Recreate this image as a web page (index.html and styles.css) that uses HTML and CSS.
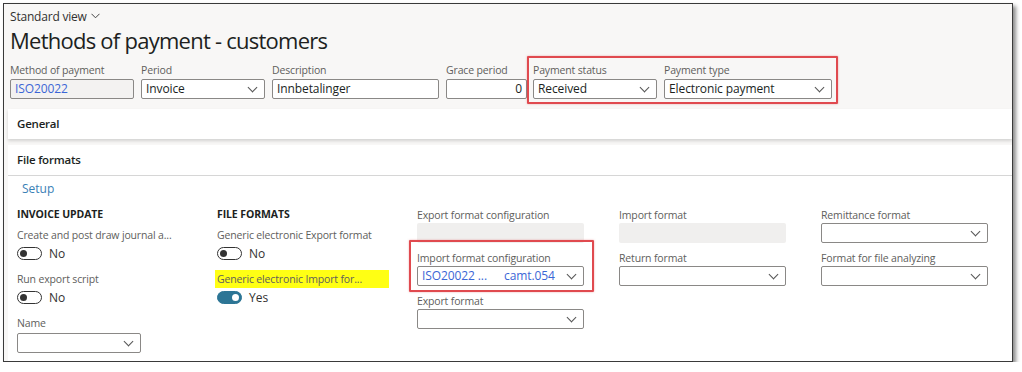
FILE: index.html
```html
<!DOCTYPE html>
<html lang="en">
<head>
    <meta charset="UTF-8">
    <title>Methods of payment - customers</title>
    <link rel="stylesheet" href="styles.css">
</head>
<body>
    <div class="frame">
        <div class="top-area">
            <div class="view-name">Standard view <svg class="view-chevron" width="9" height="6" viewBox="0 0 9 6"><path d="M0.5 0.8 L4.5 4.8 L8.5 0.8" fill="none" stroke="#444" stroke-width="1"/></svg></div>
            <h1 class="page-title">Methods of payment - customers</h1>

            <div class="header-fields">
                <div class="field w124">
                    <label>Method of payment</label>
                    <div class="input readonly link-text">ISO20022</div>
                </div>
                <div class="field w124">
                    <label>Period</label>
                    <div class="input select">Invoice</div>
                </div>
                <div class="field w167">
                    <label>Description</label>
                    <div class="input">Innbetalinger</div>
                </div>
                <div class="field w81">
                    <label>Grace period</label>
                    <div class="input number">0</div>
                </div>
                <div class="field w124 status-field">
                    <label>Payment status</label>
                    <div class="input select">Received</div>
                </div>
                <div class="field w168">
                    <label>Payment type</label>
                    <div class="input select">Electronic payment</div>
                </div>
            </div>
            <!-- red annotation box around status / type -->
            <div class="mark mark-header"></div>
        </div>

        <div class="section section-general">
            <div class="section-title">General</div>
        </div>

        <div class="section section-files">
            <div class="section-title with-line">File formats</div>
            <div class="section-body">
                <a class="setup-link">Setup</a>

                <div class="columns">
                    <div class="column">
                        <div class="group-title">INVOICE UPDATE</div>
                        <div class="field toggle-field">
                            <label>Create and post draw journal a...</label>
                            <div class="toggle-row"><span class="toggle"></span>No</div>
                        </div>
                        <div class="field toggle-field">
                            <label>Run export script</label>
                            <div class="toggle-row"><span class="toggle"></span>No</div>
                        </div>
                        <div class="field name-field">
                            <label>Name</label>
                            <div class="input select w124"></div>
                        </div>
                    </div>

                    <div class="column">
                        <div class="group-title">FILE FORMATS</div>
                        <div class="field toggle-field">
                            <label>Generic electronic Export format</label>
                            <div class="toggle-row"><span class="toggle"></span>No</div>
                        </div>
                        <div class="field toggle-field">
                            <label class="highlight">Generic electronic Import for...</label>
                            <div class="toggle-row"><span class="toggle on"></span>Yes</div>
                        </div>
                    </div>

                    <div class="column fmt-column">
                        <div class="field fmt-field">
                            <label>Export format configuration</label>
                            <div class="input disabled"></div>
                        </div>
                        <div class="field fmt-field">
                            <label>Import format configuration</label>
                            <div class="input select link-text"><span class="cfg-name">ISO20022 ...</span>camt.054</div>
                        </div>
                        <div class="field fmt-field">
                            <label>Export format</label>
                            <div class="input select"></div>
                        </div>
                        <div class="mark mark-import"></div>
                    </div>

                    <div class="column fmt-column">
                        <div class="field fmt-field">
                            <label>Import format</label>
                            <div class="input disabled"></div>
                        </div>
                        <div class="field fmt-field">
                            <label>Return format</label>
                            <div class="input select"></div>
                        </div>
                    </div>

                    <div class="column fmt-column">
                        <div class="field fmt-field">
                            <label>Remittance format</label>
                            <div class="input select"></div>
                        </div>
                        <div class="field fmt-field">
                            <label>Format for file analyzing</label>
                            <div class="input select"></div>
                        </div>
                    </div>
                </div>
            </div>
        </div>
    </div>
</body>
</html>
```

FILE: styles.css
```css
body {
    margin: 0;
    padding: 0;
    background-color: #fff;
    font-family: "Open Sans", "Noto Sans", sans-serif;
    color: #323130;
}

/* Outer screenshot frame with drop shadow */
.frame {
    position: relative;
    margin: 3px 0 0 3px;
    width: 1008px;
    height: 357px;
    border: 1px solid #3a3a3a;
    background-color: #f8f7f6;
    box-shadow: 3px 3px 4px rgba(0, 0, 0, 0.45);
    overflow: hidden;
}

.top-area {
    position: relative;
    padding: 5px 6px 0 6px;
    height: 98px;
}

.view-name {
    font-size: 12px;
    line-height: 16px;
    color: #323130;
    letter-spacing: -0.2px;
}

.view-chevron {
    margin-left: 1px;
    vertical-align: 2px;
}

.page-title {
    margin: 1px 0 0 0;
    font-size: 22px;
    font-weight: 400;
    line-height: 28px;
    color: #201f1e;
    letter-spacing: -0.75px;
}

.header-fields {
    display: flex;
    gap: 7px;
    margin-top: 9px;
}

.field label {
    display: block;
    font-size: 10.5px;
    line-height: 14px;
    color: #605e5c;
    white-space: nowrap;
    letter-spacing: -0.15px;
}

.header-fields .field label {
    margin-bottom: 2px;
}

.status-field {
    margin-left: -1px;
}

.w124 { width: 124px; }
.w167 { width: 167px; }
.w81 { width: 81px; }
.w168 { width: 168px; }

.input {
    position: relative;
    box-sizing: border-box;
    height: 20px;
    border: 1px solid #8a8886;
    border-radius: 2px;
    background-color: #fff;
    font-size: 12px;
    line-height: 18px;
    padding: 0 22px 0 4px;
    color: #201f1e;
    white-space: nowrap;
    letter-spacing: -0.1px;
}

.input.readonly {
    background-color: #f3f2f1;
}

.input.number {
    text-align: right;
    padding-right: 4px;
}

.input.disabled {
    border-color: transparent;
    background-color: #f0efee;
}

.link-text {
    color: #3b66d6;
}

/* Chevron on dropdowns */
.input.select::after {
    content: "";
    position: absolute;
    right: 8px;
    top: 4px;
    width: 6px;
    height: 6px;
    border-right: 1px solid #555;
    border-bottom: 1px solid #555;
    transform: rotate(45deg);
}

/* red annotation boxes */
.mark {
    position: absolute;
    border: 2px solid #e04a4f;
    border-radius: 1px;
    box-shadow: 0 0 2px rgba(224, 74, 79, 0.5);
    pointer-events: none;
}

.mark-header {
    left: 523px;
    top: 52px;
    width: 307px;
    height: 44px;
}

.section {
    background-color: #fff;
    margin-left: 4px;
}

.section-general {
    height: 30px;
    margin-top: 2px;
    box-shadow: 0 2px 3px rgba(0, 0, 0, 0.15);
}

.section-title {
    font-size: 11.5px;
    font-weight: 600;
    line-height: 30px;
    padding-left: 9px;
    color: #201f1e;
    letter-spacing: -0.2px;
}

.section-files {
    margin-top: 6px;
    height: 220px;
}

.section-title.with-line {
    height: 30px;
    line-height: 30px;
    border-bottom: 1px solid #d6d6d6;
}

.section-body {
    padding: 5px 0 0 9px;
}

.setup-link {
    display: block;
    margin-left: 5px;
    font-size: 12px;
    line-height: 16px;
    color: #3a80b6;
}

.columns {
    display: flex;
    margin-top: 10px;
}

.column {
    position: relative;
    width: 200px;
    flex-shrink: 0;
}

.fmt-column {
    width: 201px;
    margin-left: 1px;
    padding-top: 1px;
}

.fmt-column:nth-child(3) {
    margin-left: 0;
}

.group-title {
    font-size: 10.5px;
    font-weight: 700;
    line-height: 14px;
    color: #201f1e;
    letter-spacing: -0.1px;
}

.toggle-field {
    margin-top: 7px;
}

.toggle-field + .toggle-field {
    margin-top: 10px;
}

.toggle-row {
    display: flex;
    align-items: center;
    height: 18px;
    font-size: 12px;
    color: #323130;
    margin-top: 2px;
}

.toggle {
    position: relative;
    box-sizing: border-box;
    width: 25px;
    height: 13px;
    border: 1px solid #333;
    border-radius: 7px;
    margin-right: 7px;
    background-color: #fff;
}

.toggle::after {
    content: "";
    position: absolute;
    left: 2px;
    top: 2px;
    width: 7px;
    height: 7px;
    border-radius: 50%;
    background-color: #333;
}

.toggle.on {
    border-color: #2c7595;
    background-color: #2c7595;
}

.toggle.on::after {
    left: auto;
    right: 2px;
    background-color: #fff;
}

.highlight {
    box-sizing: border-box;
    width: 174px;
    background-color: #ffff14;
    color: #5a5a4a;
    margin: -2px 0 0 -2px;
    padding: 2px;
}

.highlight + .toggle-row {
    margin-top: 0;
}

.name-field {
    margin-top: 10px;
}

.name-field .input {
    margin-top: 3px;
}

.fmt-field {
    width: 167px;
    margin-bottom: 8px;
}

.fmt-field label {
    margin-bottom: 1px;
}

.cfg-name {
    display: inline-block;
    width: 82px;
}

.mark-import {
    left: -8px;
    top: 33px;
    width: 181px;
    height: 48px;
}
```
